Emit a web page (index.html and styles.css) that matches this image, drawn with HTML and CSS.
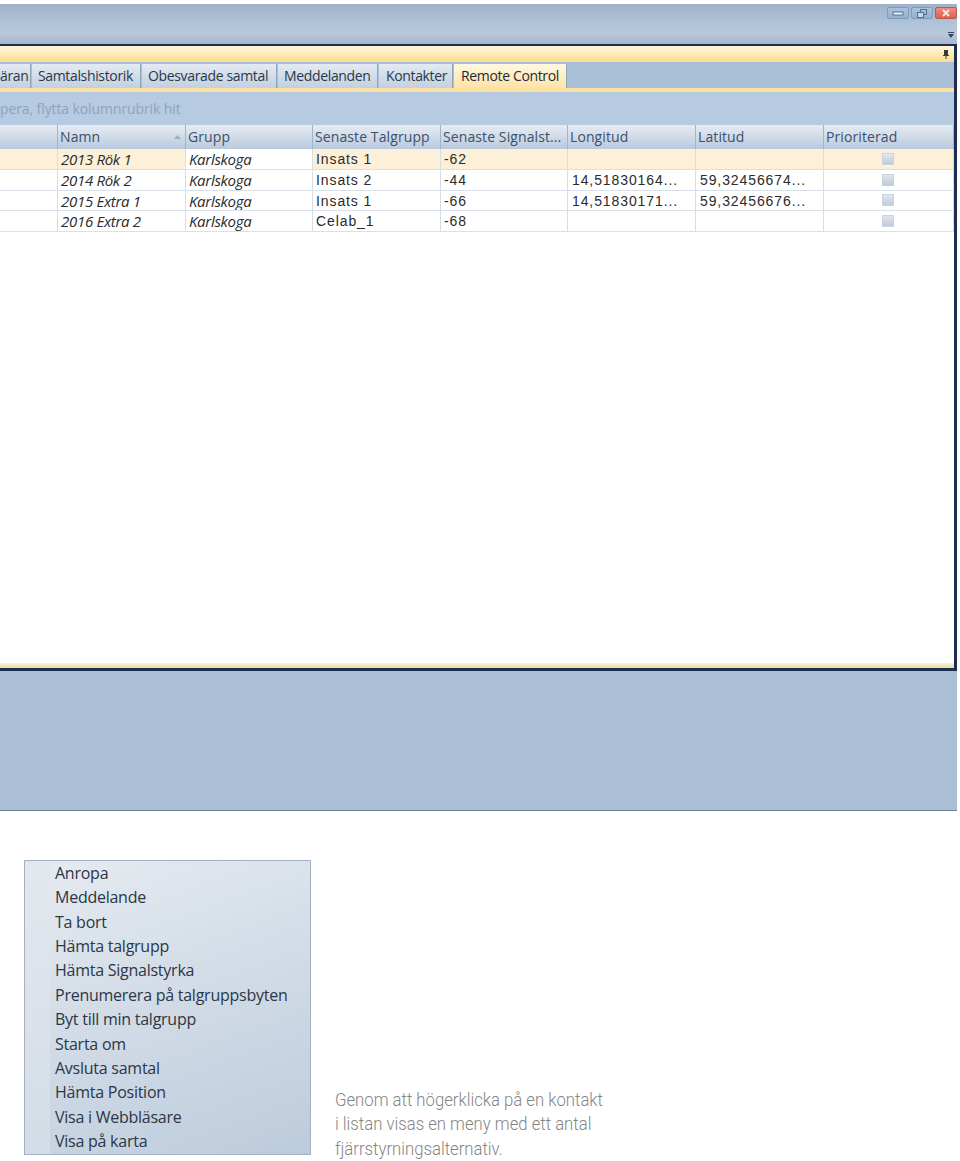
FILE: index.html
```html
<!doctype html>
<html lang="sv">
  <head>
    <meta charset="UTF-8" />
    <title>Remote Control</title>
    <link rel="stylesheet" href="styles.css">
  </head>
  <body>
    <div class="window">
      <div class="title-band">
        <div class="window-buttons">
          <span class="win-btn"><svg width="12" height="8" viewBox="0 0 12 8"><rect x="1" y="3" width="10" height="3" fill="#eef3f8" stroke="#56708f"/></svg></span>
          <span class="win-btn"><svg width="12" height="9" viewBox="0 0 12 9"><rect x="4.5" y="0.5" width="6" height="5" fill="none" stroke="#56708f"/><rect x="1.5" y="3.5" width="6" height="5" fill="#c9d6e4" stroke="#56708f"/></svg></span>
          <span class="win-btn close"><svg width="10" height="8" viewBox="0 0 10 8"><path d="M2 1l6 6M8 1L2 7" stroke="#fbe3df" stroke-width="2"/></svg></span>
        </div>
        <svg class="band-arrow" width="6" height="6" viewBox="0 0 6 6"><path d="M0 0h6v1H0zM0 2h6L3 6z" fill="#33445c"/></svg>
      </div>
      <div class="panel">
        <div class="caption-bar">
          <svg class="pin" width="6" height="9" viewBox="0 0 6 9"><path d="M1 0h4v5h1v1H3.500v3h-1V6H0V5h1z" fill="#3b3b3b"/></svg>
        </div>
        <div class="tabs">
          <span class="tab first">äran</span>
          <span class="tab t1">Samtalshistorik</span>
          <span class="tab t2">Obesvarade samtal</span>
          <span class="tab t3">Meddelanden</span>
          <span class="tab t4">Kontakter</span>
          <span class="tab t5 active">Remote Control</span>
        </div>
        <div class="tab-line"></div>
        <div class="group-bar">pera, flytta kolumnrubrik hit</div>
        <div class="row head">
          <span></span>
          <span class="sorted">Namn<svg width="7" height="4" viewBox="0 0 7 4"><path d="M3.500 0L7 4H0z" fill="#a3adb9"/></svg></span>
          <span>Grupp</span>
          <span>Senaste Talgrupp</span>
          <span>Senaste Signalst...</span>
          <span>Longitud</span>
          <span>Latitud</span>
          <span>Prioriterad</span>
        </div>
        <div class="row data selected">
          <span></span><span class="it">2013 Rök 1</span><span class="it group">Karlskoga</span><span>Insats 1</span><span>-62</span><span></span><span></span><span class="check"><i></i></span>
        </div>
        <div class="row data">
          <span></span><span class="it">2014 Rök 2</span><span class="it group">Karlskoga</span><span>Insats 2</span><span>-44</span><span class="num">14,51830164...</span><span class="num">59,32456674...</span><span class="check"><i></i></span>
        </div>
        <div class="row data">
          <span></span><span class="it">2015 Extra 1</span><span class="it group">Karlskoga</span><span>Insats 1</span><span>-66</span><span class="num">14,51830171...</span><span class="num">59,32456676...</span><span class="check"><i></i></span>
        </div>
        <div class="row data">
          <span></span><span class="it">2016 Extra 2</span><span class="it group">Karlskoga</span><span>Celab_1</span><span>-68</span><span></span><span></span><span class="check"><i></i></span>
        </div>
        <div class="grid-empty"></div>
        <div class="bottom-line"></div>
      </div>
      <div class="lower-area"></div>
    </div>

    <div class="below">
      <ul class="menu">
        <li>Anropa</li>
        <li>Meddelande</li>
        <li>Ta bort</li>
        <li>Hämta talgrupp</li>
        <li>Hämta Signalstyrka</li>
        <li>Prenumerera på talgruppsbyten</li>
        <li>Byt till min talgrupp</li>
        <li>Starta om</li>
        <li>Avsluta samtal</li>
        <li>Hämta Position</li>
        <li>Visa i Webbläsare</li>
        <li>Visa på karta</li>
      </ul>
      <p class="note">Genom att högerklicka på en kontakt<br>i listan visas en meny med ett antal<br>fjärrstyrningsalternativ.</p>
    </div>
  </body>
</html>
```

FILE: styles.css
```css
* {
  margin: 0;
  padding: 0;
  box-sizing: border-box;
}
body {
  background: #fff;
  font-family: "Open Sans", "Liberation Sans", sans-serif;
  overflow: hidden;
  height: 1161px;
}
.window {
  width: 957px;
  margin-top: 4px;
}
.title-band {
  height: 40px;
  background: linear-gradient(#9fb2ca, #b3c5da 55%, #b8c8db 75%, #a5b8ce);
  display: flex;
  flex-direction: column;
  align-items: flex-end;
}
.window-buttons {
  display: flex;
  gap: 2px;
  margin-top: 3px;
}
.win-btn {
  width: 22px;
  height: 12px;
  background: linear-gradient(#a9c3de, #8fb2d2);
  border: 1px solid #7f9cbb;
  border-radius: 2px;
  display: flex;
  align-items: center;
  justify-content: center;
}
.win-btn.close {
  background: linear-gradient(#ec8d80, #de5f50);
  border-color: #b95a50;
}
.band-arrow {
  margin: 13px 3px 0 0;
}
.panel {
  height: 627px;
  border-top: 2px solid #1d2f50;
  border-right: 3px solid #1d2f50;
  border-bottom: 3px solid #1d2f50;
  display: flex;
  flex-direction: column;
  background: #fff;
}
.caption-bar {
  height: 16px;
  background: linear-gradient(#fff6dc, #fdebb8 50%, #fbdb8f);
  display: flex;
  justify-content: flex-end;
  align-items: center;
  padding-right: 5px;
  flex: none;
}
.tabs {
  height: 26px;
  background: #a9bfd6;
  display: flex;
  align-items: flex-end;
  gap: 1px;
  flex: none;
}
.tab {
  height: 24px;
  font-size: 14px;
  letter-spacing: -0.35px;
  line-height: 24px;
  color: #2a3848;
  background: linear-gradient(#e3eaf2, #c2d0e0);
  border-right: 1px solid #8ea5be;
  padding-left: 6px;
  white-space: nowrap;
}
.tab.first { width: 31px; padding-left: 0; }
.tab.t1 { width: 109px; }
.tab.t2 { width: 135px; }
.tab.t3 { width: 100px; }
.tab.t4 { width: 74px; padding-left: 7px; }
.tab.t5 { width: 113px; padding-left: 7px; }
.tab.active {
  background: linear-gradient(#fff8e2, #fee3a6);
  color: #1d2a3a;
}
.tab-line {
  height: 4px;
  background: #fbe2a4;
  flex: none;
}
.group-bar {
  height: 33px;
  background: #b6cae2;
  color: #8fa3bd;
  font-size: 14px;
  letter-spacing: -0.1px;
  line-height: 33px;
  flex: none;
}
.row {
  display: grid;
  grid-template-columns: 58px 128px 127px 128px 127px 128px 128px 1fr;
  flex: none;
}
.row > span {
  border-right: 1px solid #d5dde8;
  padding-left: 2px;
  white-space: nowrap;
  overflow: hidden;
}
.head {
  height: 24px;
  background: linear-gradient(#e6ecf4, #b9c9dc);
  color: #3d5068;
  font-size: 14px;
  letter-spacing: 0.1px;
  line-height: 24px;
}
.head > span {
  border-right: 1px solid #a2b4c9;
}
.sorted {
  display: flex;
  align-items: center;
  justify-content: space-between;
  padding-right: 4px;
}
.data {
  height: 20.75px;
  font-family: "Liberation Sans", Arial, sans-serif;
  font-size: 14px;
  letter-spacing: 0.9px;
  line-height: 20px;
  color: #2b2b2b;
  border-bottom: 1px solid #d8e0ea;
}
.data > span {
  padding-left: 3px;
}
.data > .num {
  padding-left: 4px;
}
.data .it {
  font-family: "Open Sans", "Liberation Sans", sans-serif;
  font-size: 15px;
  font-style: italic;
  letter-spacing: -0.3px;
}
.group {
  background: #fff;
}
.selected {
  background: #fdf0d8;
}
.check {
  display: flex;
  align-items: center;
  justify-content: center;
  padding-left: 0 !important;
  padding-right: 2px;
}
.check i {
  width: 12px;
  height: 12px;
  background: linear-gradient(#e2e7ee, #bfcbd9);
  border: 1px solid #c9d2dd;
}
.grid-empty {
  flex: 1;
}
.bottom-line {
  height: 5px;
  background: linear-gradient(#f2f0e4 20%, #efe3a8 50%, #efe3a8);
  flex: none;
}
.lower-area {
  height: 140px;
  background: #aabfd5;
  border-bottom: 1px solid #6b7f99;
}
.below {
  display: flex;
  align-items: flex-end;
  padding: 49px 0 0 24px;
}
.menu {
  list-style: none;
  width: 287px;
  height: 295px;
  border: 1px solid #a4b1c3;
  background: linear-gradient(#e3e8ee, #d3dce6) 0 0 / 25px 100% no-repeat, linear-gradient(160deg, #e6ebf0, #bccbdc);
  padding: 0 0 0 30px;
}
.menu li {
  height: 24.36px;
  line-height: 24px;
  font-size: 16px;
  letter-spacing: -0.25px;
  color: #2b3746;
  white-space: nowrap;
}
.note {
  margin-left: 24px;
  font-family: "Liberation Sans Narrow", Roboto, sans-serif;
  font-weight: 300;
  font-size: 19px;
  line-height: 24.5px;
  color: #858585;
  margin-bottom: -6px;
  white-space: nowrap;
  transform: scaleX(0.88);
  transform-origin: left;
}
```
